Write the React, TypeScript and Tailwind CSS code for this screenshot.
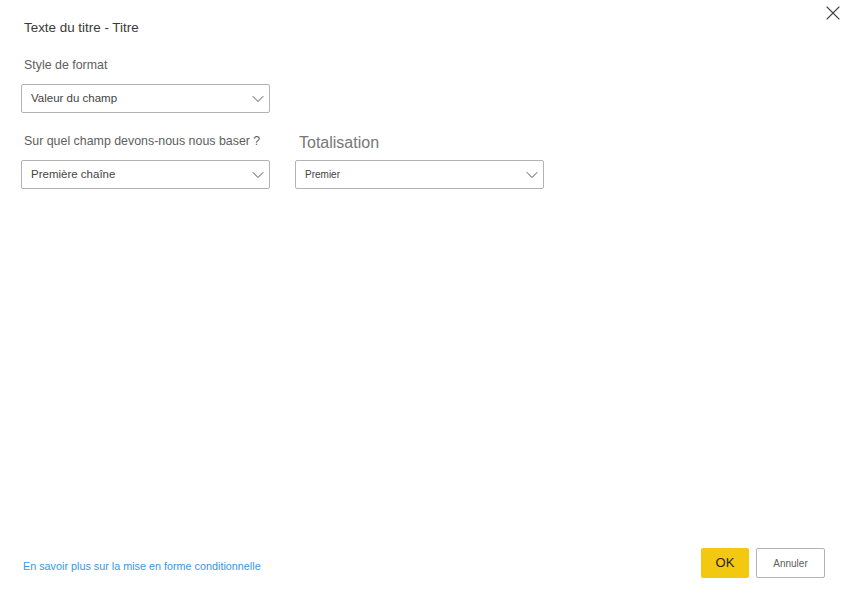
import { X, ChevronDown } from 'lucide-react'

const font = { fontFamily: '"Liberation Sans", Arial, sans-serif' }

function Select({ value, small }: { value: string; small?: boolean }) {
  return (
    <div className="h-[29px] w-[249px] border border-[#b3b3b3] rounded-[2px] flex items-center justify-between pl-[9px] pr-[1px] bg-white">
      <span className={small ? 'text-[10px] text-[#444]' : 'text-[11.5px] text-[#444]'}>{value}</span>
      <ChevronDown className="w-[20px] h-[20px] text-[#555]" strokeWidth={1.2} />
    </div>
  )
}

export default function App() {
  return (
    <div className="relative w-[846px] h-[599px] bg-white flex flex-col" style={font}>
      <button className="absolute top-[1px] left-[821px] text-[#444]">
        <X className="w-[24px] h-[24px]" strokeWidth={1.1} />
      </button>

      <div className="px-[21px] pt-[20px]">
        <h1 className="pl-[3px] text-[13.4px] leading-[16px] text-[#3b3a39]">Texte du titre - Titre</h1>

        <p className="pl-[3px] mt-[21px] mb-[11px] text-[12.4px] leading-[16px] text-[#605e5c]">Style de format</p>
        <Select value="Valeur du champ" />

        <div className="flex gap-[25px] mt-[20px]">
          <div className="flex flex-col">
            <p className="pl-[3px] mb-[11px] text-[12.4px] leading-[16px] text-[#605e5c]">Sur quel champ devons-nous nous baser ?</p>
            <Select value="Première chaîne" />
          </div>
          <div className="flex flex-col">
            <p className="pl-[4px] mb-[7px] text-[16px] leading-[20px] text-[#777]">Totalisation</p>
            <Select value="Premier" small />
          </div>
        </div>
      </div>

      <div className="mt-auto flex items-center justify-between pl-[23px] pr-[21px] pb-[21px]">
        <a className="mt-[7px] text-[10.8px] text-[#3a96dd]">En savoir plus sur la mise en forme conditionnelle</a>
        <div className="flex gap-[7px]">
          <button className="h-[30px] w-[48px] rounded-[2px] bg-[#f2c811] text-[13px] text-[#252423]">OK</button>
          <button className="h-[30px] w-[69px] rounded-[2px] border border-[#b3b3b3] bg-white text-[10px] text-[#605e5c]">Annuler</button>
        </div>
      </div>
    </div>
  )
}
